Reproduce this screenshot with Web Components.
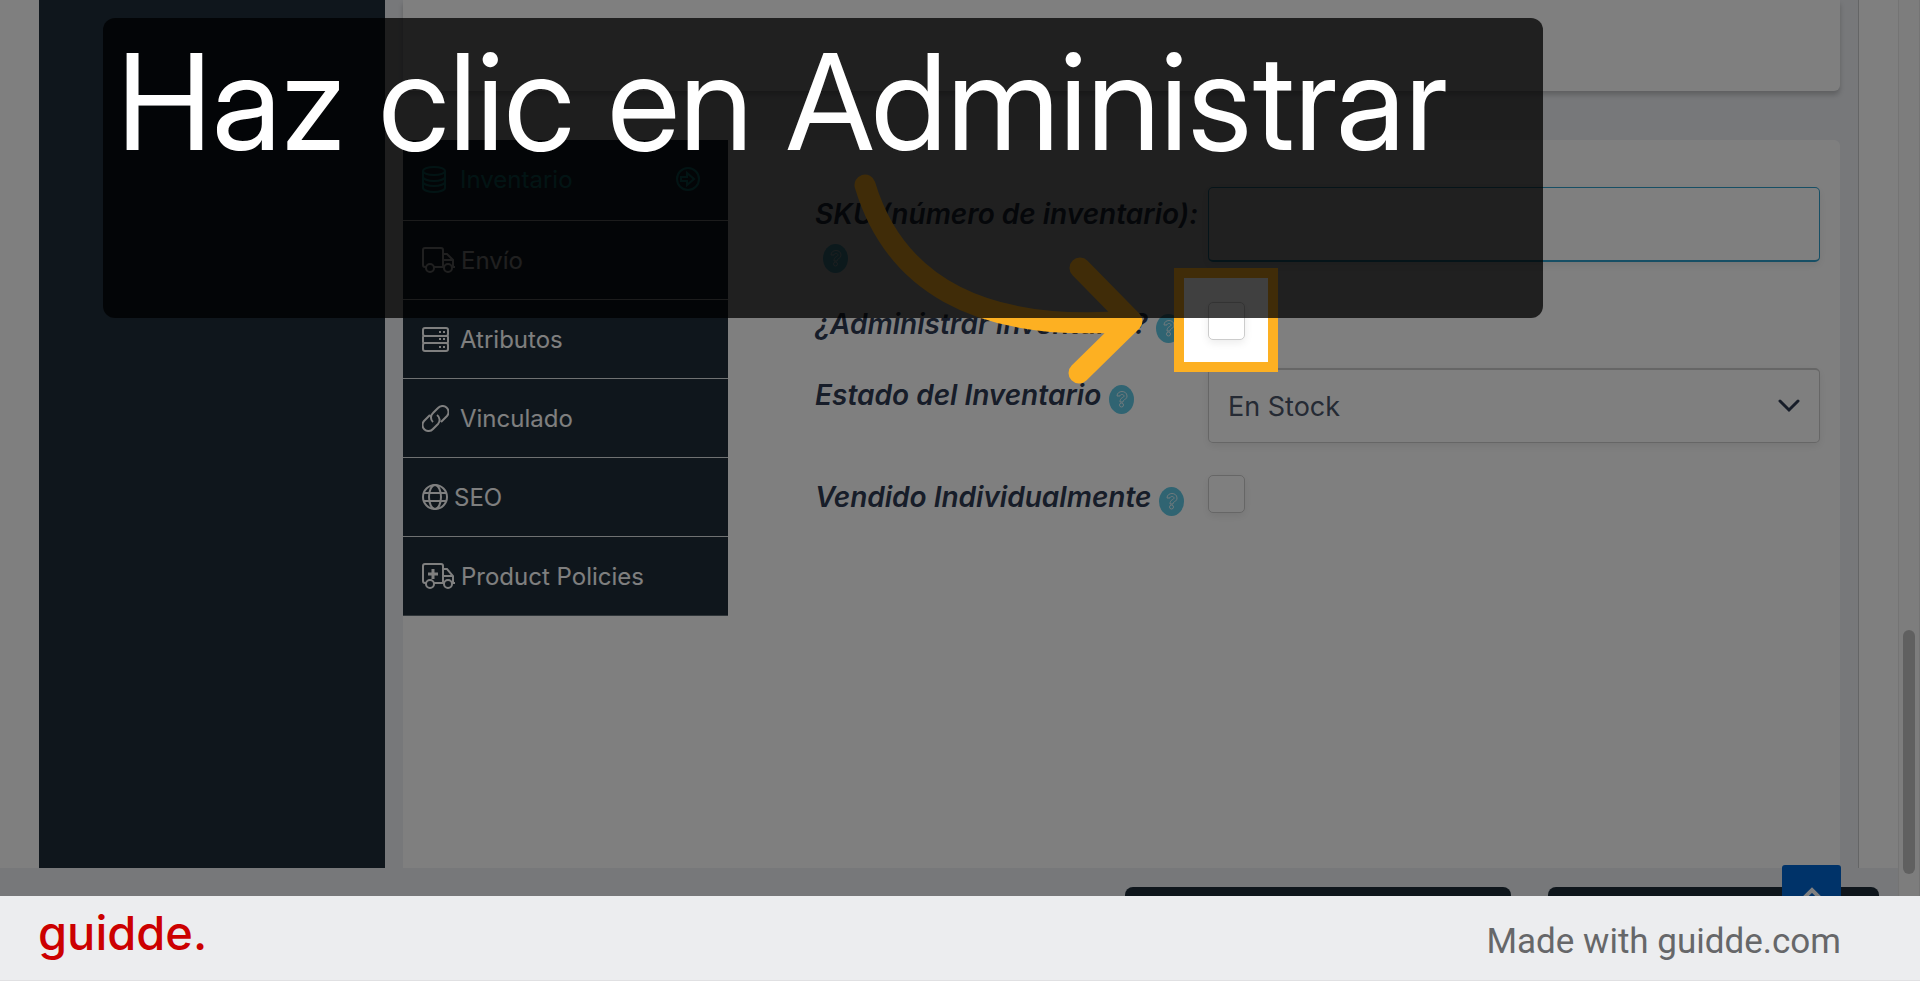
<!DOCTYPE html>
<html lang="es">
<head>
<meta charset="utf-8">
<title>Haz clic en Administrar</title>
<style>
    body {
        margin: 0;
        height: 100vh;
        display: flex;
        flex-direction: column;
        font-family: Inter, "Liberation Sans", sans-serif;
        background: #ecedef;
    }
</style>
</head>
<body>
<guide-stage>
    <product-page>
        <product-tabs slot="tabs">
            <product-tab icon="database" active>Inventario</product-tab>
            <product-tab icon="truck">Envío</product-tab>
            <product-tab icon="server">Atributos</product-tab>
            <product-tab icon="link">Vinculado</product-tab>
            <product-tab icon="globe">SEO</product-tab>
            <product-tab icon="ambulance">Product Policies</product-tab>
        </product-tabs>
        <form-field type="text" name="sku" label="SKU (número de inventario):"></form-field>
        <form-field type="checkbox" name="manage" label="¿Administrar inventario?"></form-field>
        <form-field type="select" name="status" label="Estado del Inventario" value="En Stock"></form-field>
        <form-field type="checkbox" name="single" label="Vendido Individualmente"></form-field>
    </product-page>
    <guide-pointer slot="overlay"></guide-pointer>
    <guide-title slot="overlay">Haz clic en Administrar</guide-title>
</guide-stage>
<guide-footer>Made with guidde.com</guide-footer>

<script>
const icons = {
    database: `<svg width="24" height="27" viewBox="0 0 24 27"><ellipse cx="12" cy="5" rx="11" ry="4"/><path d="M1 5v17c0 2 5 4 11 4s11-2 11-4V5M1 11c0 2 5 4 11 4s11-2 11-4M1 16c0 2 5 4 11 4s11-2 11-4"/></svg>`,
    truck: `<svg width="34" height="26" viewBox="0 0 34 26"><path d="M4 20H3a2 2 0 0 1-2-2V3a2 2 0 0 1 2-2h16a2 2 0 0 1 2 2v17M11 20h11M21 7h4l6 6v7M21 13h10M29 20h4"/><circle cx="8" cy="21" r="4"/><circle cx="26" cy="21" r="4"/></svg>`,
    server: `<svg width="27" height="25" viewBox="0 0 27 25"><rect x="1" y="1" width="25" height="8" rx="2"/><rect x="1" y="9" width="25" height="7" rx="1"/><rect x="1" y="16" width="25" height="8" rx="2"/><path d="M17 5h2M21 5h2M17 12h2M21 12h2M17 20h2M21 20h2"/></svg>`,
    link: `<svg width="27" height="27" viewBox="0 0 27 27"><path d="M11 17a6 6 0 0 1 0-9l5-5a6 6 0 0 1 9 8l-6 6M15 10a6 6 0 0 1 1 9l-5 5a6 6 0 0 1-9-8l6-6"/></svg>`,
    globe: `<svg width="27" height="27" viewBox="0 0 27 27"><circle cx="13" cy="13" r="12"/><ellipse cx="13" cy="13" rx="6" ry="12"/><path d="M2 9h22M2 17h22"/></svg>`,
    ambulance: `<svg width="34" height="26" viewBox="0 0 34 26"><path d="M4 20H3a2 2 0 0 1-2-2V3a2 2 0 0 1 2-2h16a2 2 0 0 1 2 2v17M12 20h10M21 6h4l6 7v7M21 13h10M29 20h4"/><path d="M11 6v10M6 11h10" stroke-width="3"/><circle cx="8" cy="21" r="4"/><circle cx="26" cy="21" r="4"/></svg>`
}

// the frame that holds the captured page and everything laid over it
class GuideStage extends HTMLElement {
    constructor() {
        super()
        this.attachShadow({mode: "open"}).innerHTML = /* html */`
            <style>
                :host {
                    flex: 1;
                    min-height: 0;
                    display: flex;
                    position: relative;
                    overflow: hidden;
                    background: #fff;
                }
            </style>
            <slot></slot>
            <slot name="overlay"></slot>
        `
    }
}

class ProductPage extends HTMLElement {
    constructor() {
        super()
        this.attachShadow({mode: "open"}).innerHTML = /* html */`
            <style>
                :host { flex: 1; display: flex; min-width: 0; }
                .page { flex: 1; display: flex; flex-direction: column; min-width: 0; }
                .main { flex: 1; display: flex; min-height: 0; padding: 0 39px; }
                .sidebar { width: 346px; background: #1e2c38; }
                .content {
                    flex: 1;
                    display: flex;
                    flex-direction: column;
                    gap: 49px;
                    padding: 0 18px;
                    background: #eef0f4;
                    border-right: 1px solid #c8cacc;
                }
                .card { background: #fff; }
                .previous {
                    height: 91px;
                    border-radius: 0 0 6px 6px;
                    box-shadow: 0 4px 5px rgba(0, 0, 0, .2);
                }
                .product {
                    flex: 1;
                    display: flex;
                    align-items: flex-start;
                    border-radius: 6px 6px 0 0;
                }
                form {
                    flex: 1;
                    display: flex;
                    flex-direction: column;
                    gap: 22px;
                    padding: 47px 20px 0 87px;
                }
                .actions {
                    height: 9px;
                    display: flex;
                    justify-content: flex-end;
                    gap: 37px;
                    padding: 19px 19px 0 0;
                    background: #eef0f4;
                }
                .actions button {
                    width: 386px;
                    border: 0;
                    border-radius: 8px 8px 0 0;
                    background: #1e2c38;
                }
                .actions button + button { width: 331px; }
                .top {
                    position: absolute;
                    right: 79px;
                    bottom: 0;
                    width: 59px;
                    height: 31px;
                    padding: 22px 0 0;
                    border: 0;
                    border-radius: 3px 3px 0 0;
                    background: #0066d2;
                    overflow: hidden;
                }
                .top svg { display: block; margin: auto; }
                .scrollbar {
                    width: 12px;
                    display: flex;
                    align-items: flex-end;
                    padding: 0 4px 22px;
                    border: solid #e8e8e8;
                    border-width: 0 1px;
                    background: #fbfbfb;
                }
                .thumb { flex: 1; height: 244px; border-radius: 6px; background: #c1c1c1; }
            </style>
            <div class="page">
                <div class="main">
                    <nav class="sidebar"></nav>
                    <div class="content">
                        <div class="card previous"></div>
                        <div class="card product">
                            <slot name="tabs"></slot>
                            <form><slot></slot></form>
                        </div>
                    </div>
                </div>
                <div class="actions">
                    <button type="button" aria-label="Borrador"></button>
                    <button type="button" aria-label="Enviar"></button>
                </div>
            </div>
            <div class="scrollbar"><div class="thumb"></div></div>
            <button type="button" class="top" aria-label="Subir">
                <svg width="22" height="14" viewBox="0 0 22 14" fill="none" stroke="#fff" stroke-width="4"><path d="M2 12 11 3l9 9"/></svg>
            </button>
        `
    }
}

class ProductTabs extends HTMLElement {
    constructor() {
        super()
        this.attachShadow({mode: "open"}).innerHTML = /* html */`
            <style>
                :host { width: 325px; display: flex; flex-direction: column; background: #1e2c38; }
            </style>
            <slot></slot>
        `
    }
}

class ProductTab extends HTMLElement {
    constructor() {
        super()
        const active = this.hasAttribute("active")
        const icon = this.getAttribute("icon")

        this.attachShadow({mode: "open"}).innerHTML = /* html */`
            <style>
                :host {
                    display: block;
                    color: #fff;
                    border-bottom: 1px solid #dfe2e4;
                }
                :host(:last-child) { border-color: #5f6a72; }
                :host([active]) { color: #17a2a2; }
                a {
                    display: flex;
                    align-items: center;
                    gap: 5px;
                    height: 78px;
                    padding: 0 28px 0 19px;
                    color: inherit;
                    font-size: 24px;
                    text-decoration: none;
                }
                :host([active]) a { height: 78px; padding-bottom: 2px; }
                .icon { display: flex; min-width: 33px; }
                .icon.globe { min-width: 27px; }
                .label { flex: 1; }
                svg { fill: none; stroke: currentColor; stroke-width: 2; }
            </style>
            <a href="#${icon}">
                <span class="icon ${icon}">${icons[icon]}</span>
                <span class="label"><slot></slot></span>
                ${active ? `<svg width="24" height="24" viewBox="0 0 24 24"><circle cx="12" cy="12" r="11"/><path d="M5 10h6V6l7 6-7 6v-4H5z"/></svg>` : ""}
            </a>
        `
    }
}

class FormField extends HTMLElement {
    constructor() {
        super()

        const type = this.getAttribute("type")
        const name = this.getAttribute("name")
        const label = this.getAttribute("label")
        const value = this.getAttribute("value")

        const control = type === "select" ? `
            <div class="select">
                <select id="${name}" name="${name}"><option>${value}</option></select>
                <svg width="22" height="14" viewBox="0 0 22 14"><path d="M2 2l9 9 9-9" fill="none" stroke="#2e3a52" stroke-width="3" stroke-linecap="round"/></svg>
            </div>` : `<input type="${type}" id="${name}" name="${name}">`

        this.attachShadow({mode: "open"}).innerHTML = /* html */`
            <style>
                :host {
                    display: grid;
                    grid-template-columns: 393px 1fr;
                    align-items: start;
                    color: #2e3a52;
                }
                :host([type="text"]) { min-height: 93px; }
                :host([type="select"]) { margin-bottom: 10px; }
                label {
                    padding-top: 1px;
                    font-size: 28px;
                    font-style: italic;
                    font-weight: 600;
                    line-height: 43px;
                }
                :host([type="select"]) label { padding-top: 6px; }
                :host([type="text"]) label { padding-top: 7px; line-height: 40px; }
                .help {
                    display: inline-block;
                    margin-left: 8px;
                    vertical-align: -9px;
                }
                input, select {
                    appearance: none;
                    box-sizing: border-box;
                    margin: 0;
                    border: 1px solid #ccc;
                    border-radius: 5px;
                    background: #fff;
                    box-shadow: 0 3px 8px rgba(0, 0, 0, .08);
                }
                input[type="text"] {
                    width: 100%;
                    height: 75px;
                    border-color: #2f9fcb;
                    border-bottom-width: 2px;
                }
                input[type="checkbox"] {
                    width: 37px;
                    height: 38px;
                }
                .select { display: grid; align-items: center; }
                .select > * { grid-area: 1 / 1; }
                .select svg { justify-self: end; margin-right: 20px; pointer-events: none; }
                select {
                    width: 100%;
                    height: 75px;
                    padding: 0 19px;
                    border-top-width: 2px;
                    color: #4a5568;
                    font: 27px Inter, "Liberation Sans", sans-serif;
                }
            </style>
            <label for="${name}">${label}<svg class="help" width="25" height="29" viewBox="0 0 25 29">
                <ellipse cx="12.500" cy="14.500" rx="12.500" ry="14.500" fill="#60c8e4"/>
                <path d="M8 11c0-6 10-6 10 0 0 4-4 3-4 6h-3c0-5 4-4 4-6s-4-2-4 0z" fill="none" stroke="#dff4fa"/>
                <circle cx="12.500" cy="20" r="2" fill="none" stroke="#dff4fa"/>
            </svg></label>
            ${control}
        `
    }
}

// dims the page except for the highlighted box, with an arrow to it
class GuidePointer extends HTMLElement {
    constructor() {
        super()
        this.attachShadow({mode: "open"}).innerHTML = /* html */`
            <style>
                :host { position: absolute; inset: 0; overflow: hidden; pointer-events: none; }
                .highlight {
                    position: absolute;
                    left: 1174px;
                    top: 268px;
                    width: 84px;
                    height: 84px;
                    border: 10px solid #fdb022;
                    box-shadow: 0 0 0 4000px rgba(0, 0, 0, .5);
                }
                svg { position: absolute; left: 0; top: 0; width: 100%; height: 100%; }
            </style>
            <div class="highlight"></div>
            <svg fill="none" stroke="#fdb022" stroke-width="21" stroke-linecap="round" stroke-linejoin="round">
                <path d="M865 185C893 278 972 334 1131 321M1080 268l52 53-53 52"/>
            </svg>
        `
    }
}

class GuideTitle extends HTMLElement {
    constructor() {
        super()
        this.attachShadow({mode: "open"}).innerHTML = /* html */`
            <style>
                :host {
                    position: absolute;
                    left: 103px;
                    top: 18px;
                    box-sizing: border-box;
                    width: 1440px;
                    height: 300px;
                    padding: 0 14px;
                    border-radius: 12px;
                    background: rgba(0, 0, 0, .75);
                    color: #fff;
                }
                h1 {
                    margin: 0;
                    font-family: "Inter Display", Inter, sans-serif;
                    font-size: 134px;
                    font-weight: 400;
                    line-height: 166px;
                    white-space: nowrap;
                }
            </style>
            <h1><slot></slot></h1>
        `
    }
}

class GuideFooter extends HTMLElement {
    constructor() {
        super()
        this.attachShadow({mode: "open"}).innerHTML = /* html */`
            <style>
                :host {
                    display: flex;
                    align-items: center;
                    justify-content: space-between;
                    height: 84px;
                    padding: 0 79px 0 38px;
                    border-bottom: 1px solid #e0e0e2;
                    background: #ecedef;
                }
                a {
                    padding-bottom: 10px;
                    color: #c00;
                    font-size: 47px;
                    font-weight: 500;
                    line-height: 72px;
                    text-decoration: none;
                }
                span {
                    padding-top: 8px;
                    color: #666769;
                    font: 35px/60px Roboto, sans-serif;
                }
            </style>
            <a href="#guidde">guidde.</a>
            <span><slot></slot></span>
        `
    }
}

customElements.define("guide-stage", GuideStage)
customElements.define("product-page", ProductPage)
customElements.define("product-tabs", ProductTabs)
customElements.define("product-tab", ProductTab)
customElements.define("form-field", FormField)
customElements.define("guide-pointer", GuidePointer)
customElements.define("guide-title", GuideTitle)
customElements.define("guide-footer", GuideFooter)
</script>
</body>
</html>
